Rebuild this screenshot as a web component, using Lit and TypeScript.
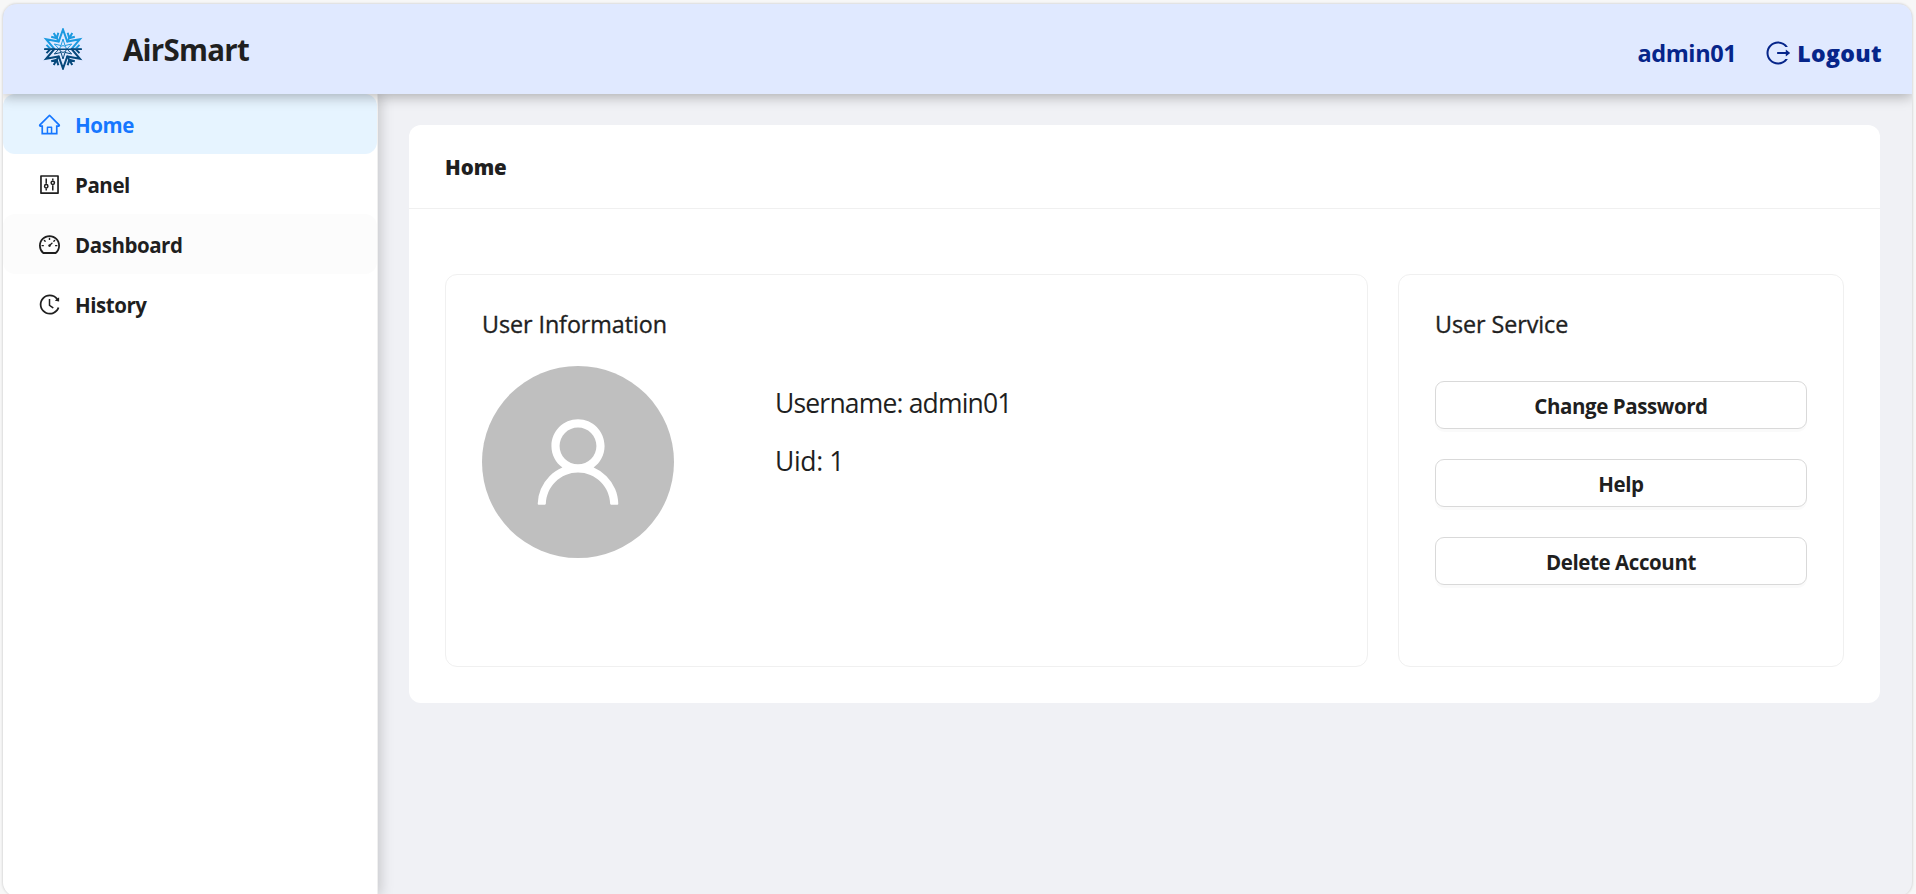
import { LitElement, html, css, svg } from "lit";
import { customElement, property } from "lit/decorators.js";

const icons: Record<string, unknown> = {
  home: svg`<path d="M946.5 505L560.1 118.8l-25.9-25.9a31.5 31.5 0 00-44.4 0L77.5 505a63.9 63.9 0 00-18.8 46c.4 35.2 29.7 63.3 64.9 63.3h42.5V940h691.8V614.3h43.4c17.1 0 33.2-6.7 45.3-18.8a63.6 63.6 0 0018.7-45.3c0-17-6.7-33.1-18.9-45.2zM568 868H456V664h112v204zm217.9-325.7V868H632V640c0-22.1-17.9-40-40-40H432c-22.1 0-40 17.9-40 40v228H238.1V542.3h-96l370-369.7 23.1 23.1L882 542.3h-96.1z"/>`,
  panel: svg`<path d="M880 112H144c-17.7 0-32 14.3-32 32v736c0 17.7 14.3 32 32 32h736c17.7 0 32-14.3 32-32V144c0-17.7-14.3-32-32-32zm-40 728H184V184h656v656z"/>
    <g fill="none" stroke="currentColor" stroke-width="64"><path d="M372 256v229M372 683v85M652 256v85M652 539v229"/><circle cx="372" cy="584" r="72"/><circle cx="652" cy="440" r="72"/></g>`,
  dashboard: svg`<path d="M924.8 385.6a446.7 446.7 0 00-96-142.4 446.7 446.7 0 00-142.4-96C631.1 123.8 572.5 112 512 112s-119.1 11.8-174.4 35.2a446.7 446.7 0 00-142.4 96 446.7 446.7 0 00-96 142.4C75.8 440.9 64 499.5 64 560c0 132.7 58.3 257.7 159.9 343.1l1.7 1.4c5.8 4.8 13.1 7.5 20.6 7.5h531.7c7.5 0 14.8-2.7 20.6-7.5l1.7-1.4C901.7 817.7 960 692.7 960 560c0-60.5-11.9-119.1-35.2-174.4zM761.4 836H262.6A371.12 371.12 0 01140 560c0-99.4 38.7-192.8 109-263 70.3-70.3 163.7-109 263-109 99.4 0 192.8 38.7 263 109 70.3 70.3 109 163.7 109 263 0 105.6-44.5 205.5-122.6 276zM623.5 421.5a8.03 8.03 0 00-11.3 0L527.7 506c-18.7-5-39.4-.2-54.1 14.5a55.95 55.95 0 000 79.2 55.95 55.95 0 0079.2 0 55.87 55.87 0 0014.5-54.1l84.5-84.5c3.1-3.1 3.1-8.2 0-11.3l-28.3-28.3zM490 320h44c4.4 0 8-3.6 8-8v-80c0-4.4-3.6-8-8-8h-44c-4.4 0-8 3.6-8 8v80c0 4.4 3.6 8 8 8zm260 218v44c0 4.4 3.6 8 8 8h80c4.4 0 8-3.6 8-8v-44c0-4.4-3.6-8-8-8h-80c-4.4 0-8 3.6-8 8zm12.7-197.2l-31.1-31.1a8.03 8.03 0 00-11.3 0l-56.6 56.6a8.03 8.03 0 000 11.3l31.1 31.1c3.1 3.1 8.2 3.1 11.3 0l56.6-56.6c3.1-3.1 3.1-8.2 0-11.3zm-458.6-31.1a8.03 8.03 0 00-11.3 0l-31.1 31.1a8.03 8.03 0 000 11.3l56.6 56.6c3.1 3.1 8.2 3.1 11.3 0l31.1-31.1c3.1-3.1 3.1-8.2 0-11.3l-56.6-56.6zM262 530h-80c-4.4 0-8 3.6-8 8v44c0 4.4 3.6 8 8 8h80c4.4 0 8-3.6 8-8v-44c0-4.4-3.6-8-8-8z"/>`,
  history: svg`<path d="M536.1 273H488c-4.4 0-8 3.6-8 8v275.3c0 2.6 1.2 5 3.3 6.5l165.3 120.7c3.6 2.6 8.6 1.9 11.2-1.7l28.6-39c2.7-3.7 1.9-8.7-1.7-11.2L544.1 528.5V281c0-4.4-3.6-8-8-8zm219.8 75.2l156.8 38.3c5 1.2 9.9-2.6 9.9-7.7l.8-161.5c0-6.7-7.7-10.5-12.9-6.3L752.9 334.1a8 8 0 003 14.1zm167.7 301.1l-56.7-19.5a8 8 0 00-10.1 4.8c-1.9 5.1-3.9 10.1-6 15.1-17.8 42.1-43.3 80-75.9 112.5a353 353 0 01-112.5 75.9 352.18 352.18 0 01-137.7 27.8c-47.8 0-94.1-9.3-137.7-27.8a353 353 0 01-112.5-75.9c-32.5-32.5-58-70.4-75.9-112.5A353.44 353.44 0 01171 512c0-47.8 9.3-94.2 27.8-137.8 17.8-42.1 43.3-80 75.9-112.5a353 353 0 01112.5-75.9C430.6 167.3 477 158 524.8 158s94.1 9.3 137.7 27.8A353 353 0 01775 261.7c10.2 10.3 19.8 21 28.6 32.3l59.8-46.8C784.7 146.6 662.2 81.9 524.6 82 285 82.1 92.6 276.7 95 516.4 97.4 751.9 288.9 942 524.8 942c185.5 0 343.5-117.6 403.7-282.3 1.5-4.2-.7-8.9-4.9-10.4z"/>`,
  logout: svg`<path d="M868 732h-70.3c-4.8 0-9.3 2.1-12.3 5.8-7 8.5-14.5 16.7-22.4 24.5a353.84 353.84 0 01-112.7 75.9A352.8 352.8 0 01512.4 866c-47.9 0-94.3-9.4-137.9-27.8a353.84 353.84 0 01-112.7-75.9 353.28 353.28 0 01-76-112.5C167.3 606.2 158 559.9 158 512s9.4-94.2 27.8-137.8c17.8-42.1 43.4-80 76-112.5s70.5-58.1 112.7-75.9c43.6-18.4 90-27.8 137.9-27.8 47.9 0 94.3 9.3 137.9 27.8 42.2 17.8 80.1 43.4 112.7 75.9 7.9 7.9 15.3 16.1 22.4 24.5 3 3.7 7.6 5.8 12.3 5.8H868c6.3 0 10.2-7 6.7-12.3C798 160.5 663.8 81.6 511.3 82 271.7 82.6 79.6 277.1 82 516.4 84.4 751.9 276.2 942 512.4 942c152.1 0 285.7-78.8 362.3-197.7 3.4-5.3-.4-12.3-6.7-12.3zm88.9-226.3L815 393.7c-5.3-4.2-13-.4-13 6.3v76H488c-4.4 0-8 3.6-8 8v56c0 4.4 3.6 8 8 8h314v76c0 6.7 7.8 10.5 13 6.3l141.9-112a8 8 0 000-12.6z"/>`,
  user: svg`<path d="M858.5 763.6a374 374 0 00-80.6-119.5 375.63 375.63 0 00-119.5-80.6c-.4-.2-.8-.3-1.2-.5C719.5 518 760 444.7 760 362c0-137-111-248-248-248S264 225 264 362c0 82.7 40.5 156 102.8 201.1-.4.2-.8.3-1.2.5-44.8 18.9-85 46-119.5 80.6a375.63 375.63 0 00-80.6 119.5A371.7 371.7 0 00136 901.8a8 8 0 008 8.2h60c4.4 0 7.9-3.5 8-7.8 2-77.2 33-149.5 87.8-204.3 56.7-56.7 132-87.9 212.2-87.9s155.5 31.2 212.2 87.9C779 752.7 810 825 812 902.2c.1 4.4 3.6 7.8 8 7.8h60a8 8 0 008-8.2c-1-47.8-10.9-94.3-29.5-138.2zM512 534c-45.9 0-89.1-17.9-121.6-50.4S340 407.9 340 362c0-45.9 17.9-89.1 50.4-121.6S466.1 190 512 190s89.1 17.9 121.6 50.4S684 316.1 684 362c0 45.9-17.9 89.1-50.4 121.6S557.9 534 512 534z"/>`,
};

@customElement("ui-icon")
class UiIcon extends LitElement {
  static styles = css`
    :host { display: block; flex: none; }
    svg { display: block; width: 100%; height: 100%; fill: currentColor; overflow: visible; }
  `;
  @property() name = "home";
  render() {
    return html`<svg viewBox="64 64 896 896">${icons[this.name]}</svg>`;
  }
}

/** Point at a given radius and clockwise angle from twelve o'clock. */
const at = (r: number, deg: number) => {
  const a = (deg * Math.PI) / 180;
  return `${(r * Math.sin(a)).toFixed(2)} ${(-r * Math.cos(a)).toFixed(2)}`;
};

const steps = [0, 60, 120, 180, 240, 300];
const star = "M" + steps.map((a) => `${at(19.5, a)}L${at(8.6, a + 30)}`).join("L") + "Z";
const rays = steps
  .map((a) => a + 30)
  .map((a) => `M${at(8, a)}L${at(18.6, a)}M${at(17, a - 14)}L${at(12.5, a)}L${at(17, a + 14)}`)
  .join("");
const core = steps.map((a) => `M${at(4, a + 30)}L${at(10, a)}L${at(4, a - 30)}`).join("");

@customElement("snow-logo")
class SnowLogo extends LitElement {
  static styles = css`
    :host { display: block; flex: none; }
    svg { display: block; width: 100%; height: 100%; }
    .ice { fill: none; stroke-width: 2; }
    .core { stroke-width: 1; }
    .light { stroke: #1c9ae0; }
    .dark { stroke: #07497c; }
    .bar { stroke-width: 1.6; }
  `;
  private shape() {
    return svg`<path d=${star}/><path d=${rays}/><path class="core" d=${core}/><circle class="core" r="3.4"/>`;
  }
  render() {
    return html`<svg viewBox="-21 -21 42 42">
      <defs>
        <clipPath id="top"><rect x="-21" y="-21" width="42" height="20.6" /></clipPath>
        <clipPath id="bottom"><rect x="-21" y="-.4" width="42" height="21.4" /></clipPath>
      </defs>
      <g clip-path="url(#top)"><g class="ice light">${this.shape()}</g></g>
      <g clip-path="url(#bottom)"><g class="ice dark">${this.shape()}</g></g>
      <path class="dark bar" d="M-18.8 .3H18.8" />
    </svg>`;
  }
}

@customElement("app-root")
class AppRoot extends LitElement {
  static styles = css`
    :host {
      display: block; box-sizing: border-box; height: 894px; overflow: hidden;
      padding: 4px 4px 0 3px; background: #f7f7f7; color: #1f1f1f;
      font-family: "Open Sans", "Noto Sans", sans-serif;
    }
    * { box-sizing: border-box; }
    .window {
      display: flex; flex-direction: column; height: 892px; overflow: hidden;
      border-radius: 14px; background: #f0f1f5; box-shadow: 0 0 2px 1px #dcdcdc;
    }
    .top {
      position: relative; z-index: 2; flex: none; height: 90px; display: flex; align-items: center;
      padding: 0 30px 0 39px; background: #e0e9ff; box-shadow: 0 3px 12px rgba(0, 0, 0, .28);
    }
    .logo { width: 42px; height: 42px; }
    .brand { margin-left: 39px; padding-top: 2px; font-size: 29.5px; font-weight: 700; line-height: 40px; letter-spacing: -.75px; }
    .account { margin-left: auto; display: flex; align-items: center; color: #06258a; padding-top: 7px; }
    .name { font-size: 23.5px; font-weight: 700; line-height: 32px; letter-spacing: -.4px; }
    .account ui-icon { width: 24px; height: 24px; margin: 0 7px 0 30px; }
    .logout { font-size: 23px; font-weight: 800; line-height: 32px; letter-spacing: .35px; }
    .body { flex: 1; display: flex; min-height: 0; }
    .side {
      width: 375px; flex: none; background: #fff; border-right: 1px solid #f0f0f0;
      box-shadow: 3px 0 12px rgba(0, 0, 0, .17);
    }
    .item {
      display: flex; align-items: center; height: 60px; padding-left: 36px; gap: 15px;
      border-radius: 12px; font-size: 20.5px; font-weight: 700; letter-spacing: -.45px;
    }
    .item ui-icon { width: 21px; height: 21px; }
    .item span { padding-top: 2px; }
    .active { background: #e6f4ff; color: #1677ff; }
    .hover { background: #fcfcfc; }
    .main { flex: 1; padding: 31px 32px 0 31px; }
    .page { height: 578px; border-radius: 12px; background: #fff; }
    .head {
      height: 84px; border-bottom: 1px solid #f0f0f0; padding: 0 36px; line-height: 84px;
      font-size: 20.5px; font-weight: 800; letter-spacing: -.05px;
    }
    .cards { display: grid; grid-template-columns: 923px 446px; gap: 30px; padding: 65px 36px 0; }
    .card { height: 393px; border: 1px solid #f0f0f0; border-radius: 12px; padding: 33px 36px 0; }
    .title {
      height: 34px; font-size: 23.3px; line-height: 32px; letter-spacing: -.06px;
      -webkit-text-stroke: .35px currentColor;
    }
    .profile { display: flex; margin-top: 24px; }
    .avatar {
      width: 192px; height: 192px; border-radius: 50%; background: #bfbfbf; color: #fff;
      display: grid; place-items: center;
    }
    .avatar ui-icon { width: 96px; height: 96px; }
    .facts { margin-left: 101px; padding-top: 8px; font-size: 26.5px; line-height: 58px; letter-spacing: -.82px; }
    .uid { letter-spacing: -.35px; }
    .actions { display: grid; gap: 30px; margin-top: 39px; }
    .btn {
      height: 48px; border: 1px solid #d9d9d9; border-radius: 9px; background: #fff; padding: 1px 0 0;
      box-shadow: 0 3px 0 rgba(0, 0, 0, .02); color: inherit; text-align: center;
      font: 700 20.5px "Open Sans", "Noto Sans", sans-serif; letter-spacing: -.42px;
    }
  `;

  render() {
    const menu = [
      { icon: "home", label: "Home", cls: "active" },
      { icon: "panel", label: "Panel", cls: "" },
      { icon: "dashboard", label: "Dashboard", cls: "hover" },
      { icon: "history", label: "History", cls: "" },
    ];
    return html`<div class="window">
      <header class="top">
        <snow-logo class="logo"></snow-logo>
        <div class="brand">AirSmart</div>
        <div class="account">
          <span class="name">admin01</span>
          <ui-icon name="logout"></ui-icon>
          <span class="logout">Logout</span>
        </div>
      </header>
      <div class="body">
        <nav class="side">
          ${menu.map((m) => html`<div class="item ${m.cls}"><ui-icon name=${m.icon}></ui-icon><span>${m.label}</span></div>`)}
        </nav>
        <main class="main">
          <section class="page">
            <div class="head">Home</div>
            <div class="cards">
              <div class="card">
                <div class="title">User Information</div>
                <div class="profile">
                  <div class="avatar"><ui-icon name="user"></ui-icon></div>
                  <div class="facts">
                    <div>Username: admin01</div>
                    <div class="uid">Uid: 1</div>
                  </div>
                </div>
              </div>
              <div class="card">
                <div class="title">User Service</div>
                <div class="actions">
                  ${["Change Password", "Help", "Delete Account"].map((t) => html`<button class="btn">${t}</button>`)}
                </div>
              </div>
            </div>
          </section>
        </main>
      </div>
    </div>`;
  }
}
